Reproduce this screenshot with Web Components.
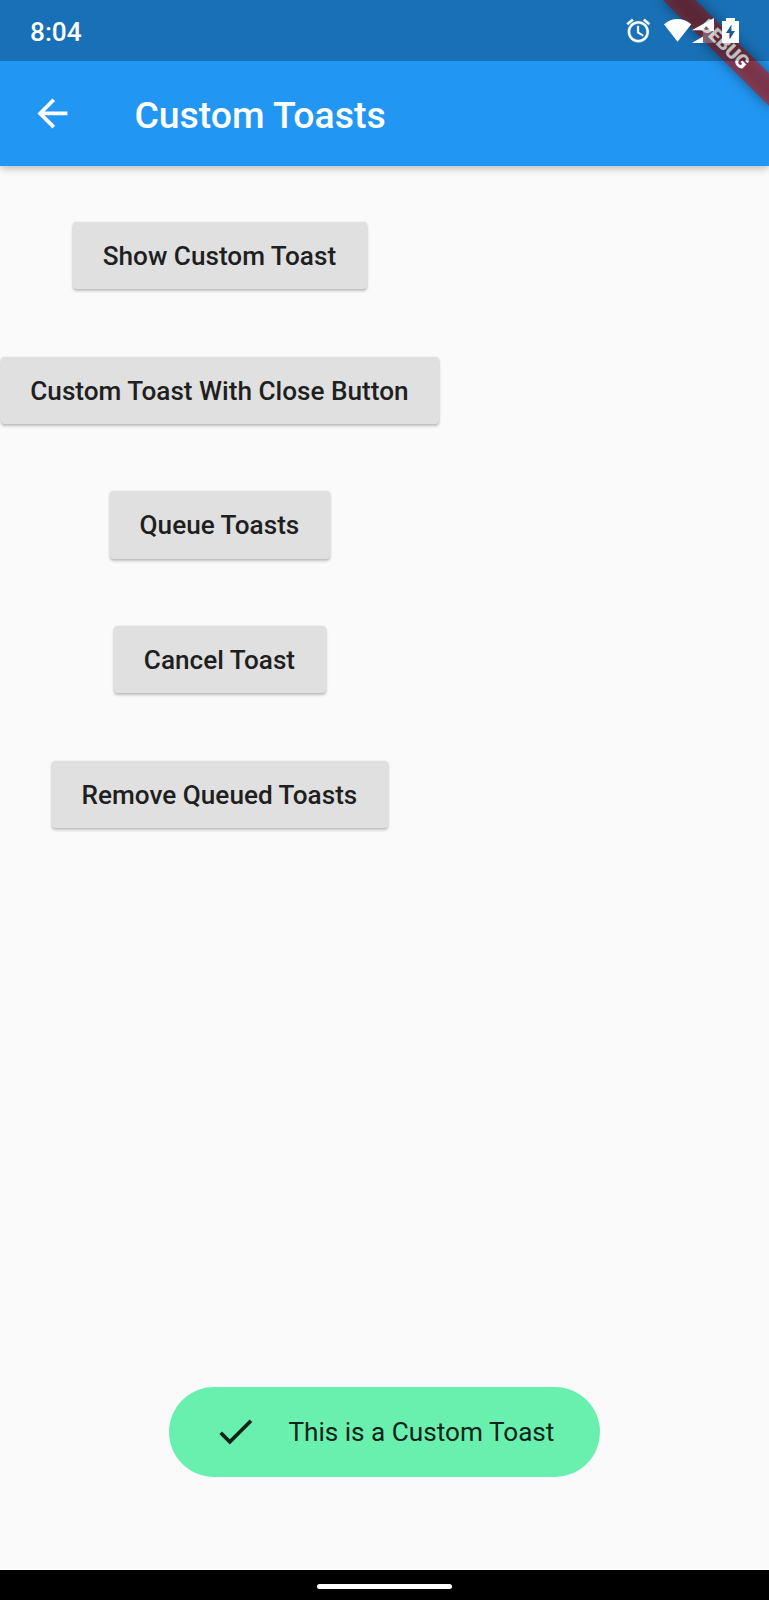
<!DOCTYPE html>
<html lang="en"><head><meta charset="utf-8"><title>Custom Toasts</title>
<style>
html,body{margin:0;height:100%;background:#fafafa}
body{font-family:Roboto,"Liberation Sans",sans-serif;color:#1f1f1f}
</style></head><body>
<phone-shell>
  <app-bar slot="bar">Custom Toasts</app-bar>
  <debug-banner slot="banner">DEBUG</debug-banner>
  <status-bar slot="status">8:04</status-bar>
  <raised-button>Show Custom Toast</raised-button>
  <raised-button>Custom Toast With Close Button</raised-button>
  <raised-button>Queue Toasts</raised-button>
  <raised-button>Cancel Toast</raised-button>
  <raised-button>Remove Queued Toasts</raised-button>
  <toast-pill slot="toast">This is a Custom Toast</toast-pill>
  <gesture-bar slot="nav"></gesture-bar>
</phone-shell>
<script>
const define=(name,html)=>customElements.define(name,class extends HTMLElement{
  constructor(){super();this.attachShadow({mode:'open'}).innerHTML=html;}
});
define('phone-shell',`<style>
:host{display:grid;position:relative;overflow:hidden;width:769px;height:1600px;grid-template-columns:100%;grid-template-rows:61px 105px 1fr 30px;background:#fafafa}
slot[name=bar]::slotted(*){grid-area:1/1/3/2;z-index:1}
slot[name=banner]::slotted(*){z-index:2}
slot[name=status]::slotted(*){grid-area:1/1/2/2;z-index:3}
slot[name=nav]::slotted(*){grid-area:4/1/5/2}
main{grid-area:3/1/4/2;display:flex;flex-direction:column;justify-content:space-between;align-items:flex-start}
.list{display:flex;flex-direction:column;align-items:center;width:440px;padding-top:56.100px;gap:67.350px}
.toast{align-self:center;margin-bottom:93px}
</style><slot name="bar"></slot><slot name="banner"></slot><slot name="status"></slot>
<main><div class="list"><slot></slot></div><div class="toast"><slot name="toast"></slot></div></main><slot name="nav"></slot>`);
define('status-bar',`<style>
:host{display:flex;align-items:center;background:rgba(0,0,0,.25);color:#fff;font-size:26.2px;font-weight:500;padding-left:30px;box-sizing:border-box}
.t{flex:1;padding-top:2px}svg{display:block;width:169px;height:61px}
</style><div class="t"><slot></slot></div>
<svg viewBox="600 0 169 61" fill="#fff">
<g transform="translate(624.3 16.6) scale(1.17)" stroke="#fff" stroke-width=".3"><path d="M22 5.72l-4.6-3.86-1.29 1.53 4.6 3.86L22 5.72zM7.88 3.39L6.6 1.86 2 5.71l1.29 1.53 4.59-3.85zM12.5 8H11v6l4.75 2.85.75-1.23-4-2.37V8zM12 4c-4.97 0-9 4.03-9 9s4.02 9 9 9 9-4.03 9-9-4.03-9-9-9zm0 16c-3.87 0-7-3.13-7-7s3.13-7 7-7 7 3.13 7 7-3.13 7-7 7z"/></g>
<path d="M677.5 41.7L664 24.2Q670 19 677.5 19T691.3 24.2Z"/>
<path d="M691.8 30.2L705 23L708 21.300L714 18V31H711L706 26L703 30.2ZM691.8 43L703 36.500V43Z"/>
<path d="M706 26L711 31H714V43H703V30.200Z" opacity=".25"/>
<path fill-rule="evenodd" d="M726 18h9v3h4v22h-17V21h4zM731.5 24.500l-5.500 8.500h3.500v6.500l5.500-8.500h-3.500z"/>
</svg>`);
define('app-bar',`<style>
:host{display:flex;align-items:center;box-sizing:border-box;padding:61px 0 0 30px;background:#2196f3;color:#fff;font-size:37.4px;font-weight:500;box-shadow:0 2px 8px rgba(0,0,0,.28)}
svg{width:44.900px;height:44.900px;margin-right:59.500px;flex:none}
span{padding-top:2px}
</style><svg viewBox="0 0 24 24" fill="#fff"><path d="M20 11H7.830l5.590-5.590L12 4l-8 8 8 8 1.410-1.410L7.830 13H20v-2z"/></svg><span><slot></slot></span>`);
define('debug-banner',`<style>
:host{position:absolute;left:769px;top:0;width:0;height:0;transform:rotate(45deg)}
div{position:absolute;left:-74.800px;top:52.300px;width:149.500px;height:22.430px;color:#fff;font-size:19.060px;line-height:22.430px;font-weight:900;text-align:center}
.shade{background:rgba(0,0,0,.42);filter:blur(6.500px)}
.band{background:rgba(183,28,28,.627)}
</style><div class="shade"></div><div class="band"><slot></slot></div>`);
define('raised-button',`<style>
:host{display:block}
button{display:block;height:67.300px;padding:0 30.700px 0 29.600px;border:0;border-radius:3.740px;background:#e0e0e0;color:#1f1f1f;font:500 26.170px/68px Roboto,"Liberation Sans",sans-serif;box-shadow:0 2px 3px rgba(0,0,0,.24),0 0 2px rgba(0,0,0,.1);white-space:nowrap}
</style><button><slot></slot></button>`);
define('toast-pill',`<style>
:host{display:flex;align-items:center;width:431px;height:90px;box-sizing:border-box;padding-left:43.900px;border-radius:46.700px;background:#69f0ae;color:#0f2419;font-size:26.170px;white-space:nowrap}
svg{width:44.900px;height:44.900px;margin:0 30.600px 1px 0;flex:none}
</style><svg viewBox="0 0 24 24" fill="#0f2419"><path d="M9 16.170L4.830 12l-1.420 1.410L9 19 21 7l-1.410-1.410z"/></svg><span><slot></slot></span>`);
define('gesture-bar',`<style>
:host{display:flex;justify-content:center;align-items:center;background:#000}
i{width:135px;height:5px;border-radius:3px;background:#fff;margin:2px 1px 0 0}
</style><i></i>`);
</script></body></html>
